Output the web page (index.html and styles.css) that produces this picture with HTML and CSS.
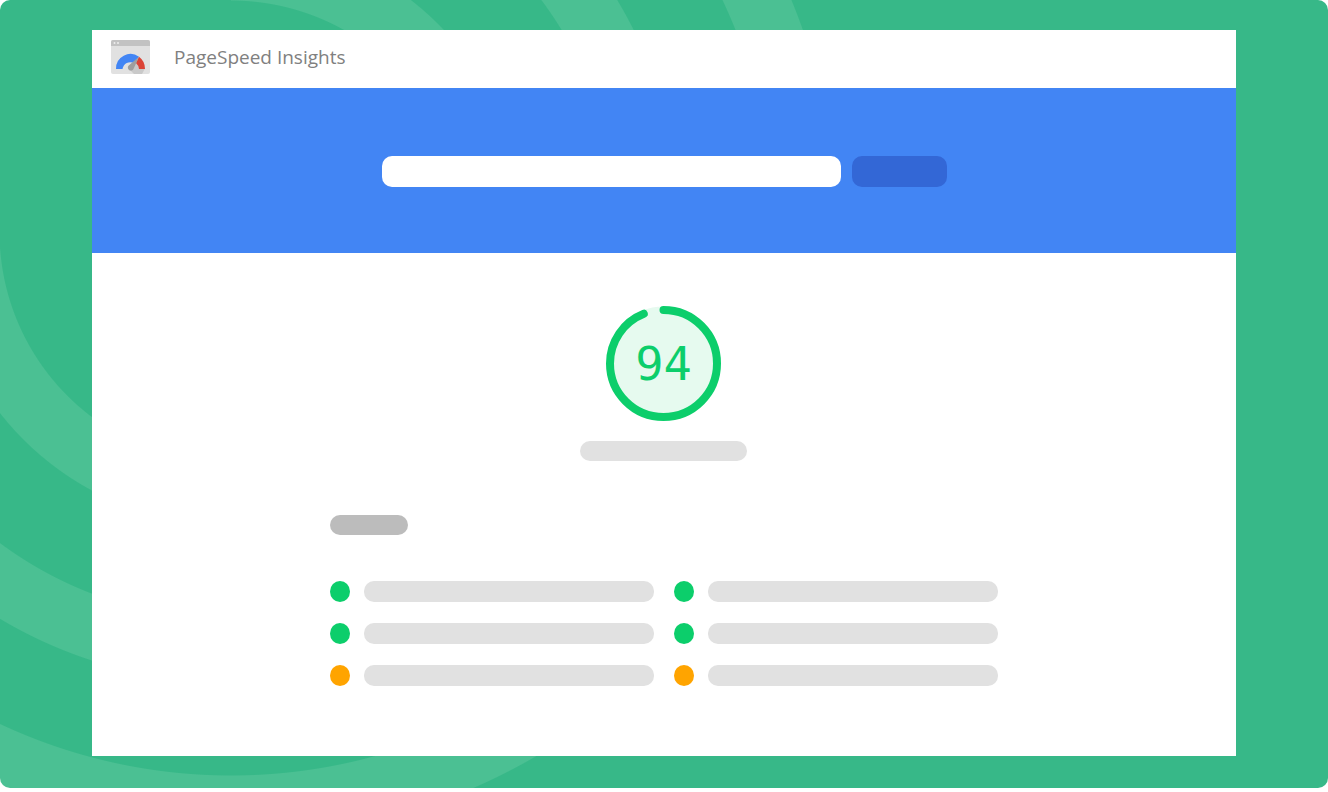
FILE: index.html
```html
<!DOCTYPE html>
<html lang="en">
<head>
    <meta charset="UTF-8">
    <meta name="viewport" content="width=device-width, initial-scale=1.0">
    <title>PageSpeed Insights</title>
    <link rel="stylesheet" href="styles.css">
</head>
<body>
    <div class="backdrop">
        <div class="window">
            <header class="header">
                <svg class="logo" viewBox="0 0 39 34" aria-hidden="true">
                    <rect width="39" height="34" rx="2" fill="#e1e1e1"/>
                    <path d="M0 6V2a2 2 0 0 1 2-2h35a2 2 0 0 1 2 2v4z" fill="#c2c2c2"/>
                    <circle cx="3.5" cy="3" r="1" fill="#eee"/>
                    <circle cx="7" cy="3" r="1" fill="#eee"/>
                    <path d="M28 17l6 11.500-3 5.500H23l-5-5z" fill="#c9c9c9"/>
                    <path d="M5 29a14.500 14.500 0 0 1 23-12.200l-5 6.200A8 8 0 0 0 11.500 29z" fill="#4285f4"/>
                    <path d="M28 16.800A15 15 0 0 1 34 29h-6a9 9 0 0 0-3-6z" fill="#db4437"/>
                    <path d="M28 16.800L18 25.200a3 3 0 1 0 4.600 3.500z" fill="#9e9e9e"/>
                </svg>
                <h1 class="title">PageSpeed Insights</h1>
            </header>

            <form class="search">
                <input class="search-input" type="text" aria-label="Web page URL">
                <button class="search-btn" type="button" aria-label="Analyze"></button>
            </form>

            <main class="report">
                <div class="score">
                    <svg class="gauge" viewBox="0 0 115 115" role="img" aria-label="Score 94">
                        <circle class="gauge-base" cx="57.5" cy="57.5" r="57"/>
                        <circle class="gauge-arc" cx="57.5" cy="57.5" r="53.5" pathLength="100"/>
                        <text class="gauge-text" x="57.5" y="74">94</text>
                    </svg>
                    <div class="score-label"></div>
                </div>

                <section class="metrics">
                    <div class="metrics-title"></div>
                    <ul class="metrics-list">
                        <li class="metric"><span class="dot good"></span><span class="line"></span></li>
                        <li class="metric"><span class="dot good"></span><span class="line"></span></li>
                        <li class="metric"><span class="dot good"></span><span class="line"></span></li>
                        <li class="metric"><span class="dot good"></span><span class="line"></span></li>
                        <li class="metric"><span class="dot average"></span><span class="line"></span></li>
                        <li class="metric"><span class="dot average"></span><span class="line"></span></li>
                    </ul>
                </section>
            </main>
        </div>
    </div>
</body>
</html>
```

FILE: styles.css
```css
* {
    box-sizing: border-box;
}
body {
    margin: 0;
    font-family: "Open Sans", "Noto Sans", sans-serif;
    background-color: white;
}
/* Green backdrop with three lighter rings, the first one squared off top left */
.backdrop {
    padding: 30px 92px 32px;
    border-radius: 10px;
    background:
        linear-gradient(#37b888, #37b888) 0 0 / 231px 232px no-repeat,
        radial-gradient(circle at 231px 232px,
            #37b888 231px, #4bc093 232px,
            #4bc093 293px, #37b888 294px,
            #37b888 387px, #4bc093 388px,
            #4bc093 450px, #37b888 451px,
            #37b888 543px, #4bc093 544px,
            #4bc093 606px, #37b888 607px);
}
.window {
    background-color: white;
}
.header {
    display: flex;
    align-items: center;
    gap: 24px;
    height: 58px;
    padding: 0 19px 4px;
}
.logo {
    width: 39px;
    height: 34px;
}
.title {
    margin: 0;
    font-size: 19px;
    font-weight: 400;
    line-height: 26px;
    color: #808080;
}
.search {
    display: flex;
    justify-content: center;
    gap: 11px;
    padding: 68px 20px 66px;
    background-color: #4285f4;
}
.search-input {
    width: 459px;
    height: 31px;
    padding: 0 12px;
    border: none;
    border-radius: 10px;
    background-color: white;
    font: inherit;
}
.search-btn {
    width: 95px;
    height: 31px;
    border: none;
    border-radius: 10px;
    background-color: #3367d6;
    cursor: pointer;
}
.report {
    padding: 53px 20px 70px;
}
.score {
    display: flex;
    flex-direction: column;
    align-items: center;
    gap: 20px;
    padding-right: 1px;
}
.gauge {
    width: 115px;
    height: 115px;
}
.gauge-base {
    fill: #e6faef;
}
.gauge-arc {
    fill: none;
    stroke: #0cce6b;
    stroke-width: 8;
    stroke-linecap: round;
    stroke-dasharray: 94 100;
    transform: rotate(-90deg);
    transform-origin: center;
}
.gauge-text {
    fill: #0cce6b;
    font-family: "DejaVu Sans Mono", monospace;
    font-size: 47px;
    text-anchor: middle;
}
.score-label {
    width: 167px;
    height: 20px;
    border-radius: 10px;
    background-color: #e1e1e1;
}
.metrics {
    max-width: 668px;
    margin: 54px auto 0;
}
.metrics-title {
    width: 78px;
    height: 20px;
    border-radius: 10px;
    background-color: #bcbcbc;
}
.metrics-list {
    display: grid;
    grid-template-columns: 1fr 1fr;
    gap: 21px 20px;
    margin: 46px 0 0;
    padding: 0;
    list-style: none;
}
.metric {
    display: flex;
    gap: 14px;
}
.dot {
    width: 20px;
    height: 21px;
    border-radius: 50%;
}
.good {
    background-color: #0cce6b;
}
.average {
    background-color: #ffa400;
}
.line {
    flex: 1;
    height: 21px;
    border-radius: 10px;
    background-color: #e1e1e1;
}
```
